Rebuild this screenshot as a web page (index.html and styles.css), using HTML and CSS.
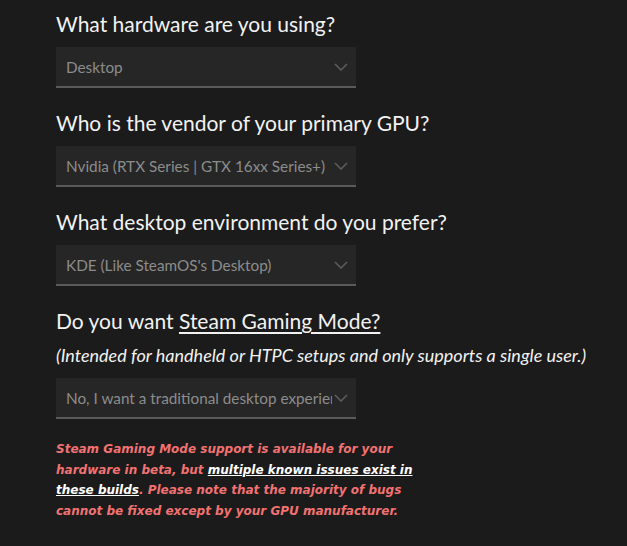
FILE: index.html
```html
<!DOCTYPE html>
<html lang="en">
<head>
    <meta charset="UTF-8">
    <meta name="viewport" content="width=device-width, initial-scale=1.0">
    <title>Installer options</title>
    <link rel="stylesheet" href="styles.css">
</head>
<body>
    <main class="form">
        <section class="question">
            <h2>What hardware are you using?</h2>
            <div class="select">
                <span class="value">Desktop</span>
                <svg class="chevron" width="14" height="8" viewBox="0 0 14 8"><path d="M1 1l6 6 6-6" fill="none" stroke="#5c5c5c" stroke-width="1.6"/></svg>
            </div>
        </section>

        <section class="question">
            <h2>Who is the vendor of your primary GPU?</h2>
            <div class="select">
                <span class="value">Nvidia (RTX Series | GTX 16xx Series+)</span>
                <svg class="chevron" width="14" height="8" viewBox="0 0 14 8"><path d="M1 1l6 6 6-6" fill="none" stroke="#5c5c5c" stroke-width="1.6"/></svg>
            </div>
        </section>

        <section class="question">
            <h2>What desktop environment do you prefer?</h2>
            <div class="select">
                <span class="value">KDE (Like SteamOS's Desktop)</span>
                <svg class="chevron" width="14" height="8" viewBox="0 0 14 8"><path d="M1 1l6 6 6-6" fill="none" stroke="#5c5c5c" stroke-width="1.6"/></svg>
            </div>
        </section>

        <section class="question">
            <h2>Do you want <a href="#">Steam Gaming Mode?</a></h2>
            <p class="note">(Intended for handheld or HTPC setups and only supports a single user.)</p>
            <div class="select">
                <span class="value">No, I want a traditional desktop experience</span>
                <svg class="chevron" width="14" height="8" viewBox="0 0 14 8"><path d="M1 1l6 6 6-6" fill="none" stroke="#5c5c5c" stroke-width="1.6"/></svg>
            </div>
            <p class="warning">Steam Gaming Mode support is available for your hardware in beta, but <a href="#">multiple known issues exist in these builds</a>. Please note that the majority of bugs cannot be fixed except by your GPU manufacturer.</p>
        </section>
    </main>
</body>
</html>
```

FILE: styles.css
```css
body {
    margin: 0;
    background: #1b1b1b;
    color: #f2f2f2;
    font-family: Lato, "Open Sans", sans-serif;
}

.form {
    padding: 11px 56px 0;
}

.question {
    margin-bottom: 22px;
}

h2 {
    margin: 0 0 10px;
    font-size: 21px;
    font-weight: 400;
    line-height: 26px;
}

h2 a {
    color: #f2f2f2;
    text-decoration: underline;
    text-underline-offset: 3px;
}

.note {
    margin: 0 0 12px;
    font-size: 18px;
    font-style: italic;
    line-height: 22px;
    white-space: nowrap;
}

.select {
    display: flex;
    align-items: center;
    width: 300px;
    height: 41px;
    box-sizing: border-box;
    padding: 0 8px 0 10px;
    background: #262626;
    border-bottom: 2px solid #5a5a5a;
}

.value {
    flex: 1;
    overflow: hidden;
    white-space: nowrap;
    color: #8c8c8c;
    font-size: 15.3px;
}

.chevron {
    flex: none;
    margin-left: 2px;
}

.warning {
    width: 366px;
    margin: 20px 0 0;
    color: #f27272;
    font-family: "DejaVu Sans", sans-serif;
    font-size: 12px;
    font-weight: bold;
    font-style: italic;
    line-height: 20.5px;
}

.warning a {
    color: #ffffff;
}
```
